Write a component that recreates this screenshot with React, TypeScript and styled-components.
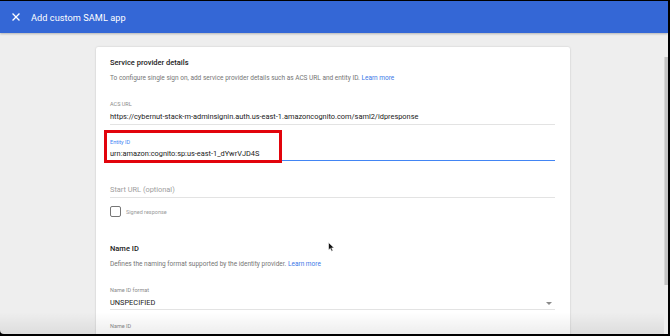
import React from 'react';
import styled, { createGlobalStyle } from 'styled-components';

const GlobalStyle = createGlobalStyle`
    html, body {
        margin: 0;
        padding: 0;
        background: #000;
        overflow: hidden;
    }
    * {
        box-sizing: border-box;
    }
`;

const Frame = styled.div`
    width: 670px;
    height: 336px;
    background: #000;
    padding: 1px 2px 2px 0;
    font-family: Roboto, 'Liberation Sans', sans-serif;
`;

const Window = styled.div`
    width: 100%;
    height: 100%;
    display: flex;
    flex-direction: column;
    background: #eeeeee;
    border-bottom-left-radius: 4px;
    overflow: hidden;
`;

const Header = styled.header`
    height: 32px;
    flex-shrink: 0;
    display: flex;
    align-items: center;
    gap: 11px;
    padding-left: 12px;
    background: #3467d6;
    color: #fff;
    box-shadow: 0 1px 2px rgba(0, 0, 0, 0.25);
    position: relative;
    z-index: 1;
`;

const Title = styled.h1`
    margin: 0;
    font-size: 9.2px;
    font-weight: 400;
    letter-spacing: 0.05px;
`;

const Body = styled.div`
    flex: 1;
    display: flex;
    min-height: 0;
`;

const Main = styled.main`
    flex: 1;
    position: relative;
    padding: 14px 0 0 96px;
    overflow: hidden;
`;

const ScrollTrack = styled.div`
    width: 4px;
    padding-top: 24px;
`;

const ScrollThumb = styled.div`
    height: 228px;
    background: #c3c3c3;
    border-left: 1px solid #d6d6d6;
`;

const Card = styled.section`
    width: 474px;
    height: 320px;
    background: #fff;
    padding: 11px 15px 0 14px;
    box-shadow: 0 0 2px rgba(0, 0, 0, 0.18), 0 1px 1px rgba(0, 0, 0, 0.08);
    border-radius: 2px;
`;

const SectionTitle = styled.h2<{ $top?: number }>`
    margin: ${(p) => p.$top ?? 0}px 0 0;
    font-size: 7.5px;
    line-height: 10px;
    font-weight: 500;
    color: #222;
`;

const SectionDesc = styled.p`
    margin: 6px 0 0;
    font-size: 6.5px;
    line-height: 9px;
    color: #757575;
`;

const Link = styled.a`
    color: #3b78e7;
    text-decoration: none;
`;

const Field = styled.div<{ $top: number; $focused?: boolean; $bare?: boolean }>`
    position: relative;
    margin-top: ${(p) => p.$top}px;
    border-bottom: 1px solid ${(p) => (p.$bare ? 'transparent' : p.$focused ? '#4285f4' : '#e3e3e3')};
`;

const FieldLabel = styled.div<{ $focused?: boolean }>`
    font-size: 5.5px;
    line-height: 8px;
    color: ${(p) => (p.$focused ? '#4285f4' : '#8a8a8a')};
`;

const FieldValue = styled.div<{ $gap: number; $pad: number; $muted?: boolean }>`
    display: flex;
    justify-content: space-between;
    align-items: center;
    margin-top: ${(p) => p.$gap}px;
    padding-bottom: ${(p) => p.$pad}px;
    font-size: 7.4px;
    line-height: 10px;
    color: ${(p) => (p.$muted ? '#9e9e9e' : '#212121')};
`;

const Caret = styled.span`
    width: 0;
    height: 0;
    margin-right: 3px;
    border-left: 3px solid transparent;
    border-right: 3px solid transparent;
    border-top: 3px solid #8a8a8a;
`;

const Highlight = styled.div`
    position: absolute;
    left: -6px;
    top: -8px;
    width: 178px;
    height: 33px;
    border: 3px solid #e2040c;
    pointer-events: none;
`;

const CheckRow = styled.label`
    display: flex;
    align-items: center;
    gap: 5px;
    margin-top: 8px;
    font-size: 5.5px;
    color: #9a9a9a;
`;

const CheckBox = styled.span`
    width: 11px;
    height: 11px;
    border: 1.5px solid #767676;
    border-radius: 2px;
`;

const BottomFade = styled.div`
    position: absolute;
    left: 0;
    right: 0;
    bottom: 0;
    height: 22px;
    background: linear-gradient(rgba(0, 0, 0, 0), rgba(0, 0, 0, 0.07));
    pointer-events: none;
`;

const Cursor = styled.svg`
    position: absolute;
    left: 328px;
    top: 209px;
`;

const CloseIcon = () => (
    <svg width="8" height="8" viewBox="0 0 8 8">
        <path d="M1 1L7 7M7 1L1 7" stroke="#fff" strokeWidth="1.3" strokeLinecap="square" />
    </svg>
);

const App = () => {
    return (
        <>
            <GlobalStyle />
            <Frame>
                <Window>
                    <Header>
                        <CloseIcon />
                        <Title>Add custom SAML app</Title>
                    </Header>
                    <Body>
                        <Main>
                            <Card>
                                <SectionTitle>Service provider details</SectionTitle>
                                <SectionDesc>
                                    To configure single sign on, add service provider details such as ACS URL and entity ID.{' '}
                                    <Link>Learn more</Link>
                                </SectionDesc>

                                <Field $top={17}>
                                    <FieldLabel>ACS URL</FieldLabel>
                                    <FieldValue $gap={4} $pad={2}>
                                        https://cybernut-stack-m-adminsignin.auth.us-east-1.amazoncognito.com/saml2/idpresponse
                                    </FieldValue>
                                </Field>

                                <Field $top={13} $focused>
                                    <FieldLabel $focused>Entity ID</FieldLabel>
                                    <FieldValue $gap={3} $pad={1}>
                                        urn:amazon:cognito:sp:us-east-1_dYwrVJD4S
                                    </FieldValue>
                                    <Highlight />
                                </Field>

                                <Field $top={24}>
                                    <FieldValue $gap={0} $pad={2} $muted>
                                        Start URL (optional)
                                    </FieldValue>
                                </Field>

                                <CheckRow>
                                    <CheckBox />
                                    Signed response
                                </CheckRow>

                                <SectionTitle $top={27}>Name ID</SectionTitle>
                                <SectionDesc>
                                    Defines the naming format supported by the identity provider. <Link>Learn more</Link>
                                </SectionDesc>

                                <Field $top={17}>
                                    <FieldLabel>Name ID format</FieldLabel>
                                    <FieldValue $gap={4} $pad={1}>
                                        UNSPECIFIED
                                        <Caret />
                                    </FieldValue>
                                </Field>

                                <Field $top={12} $bare>
                                    <FieldLabel>Name ID</FieldLabel>
                                </Field>
                            </Card>
                            <Cursor width="7" height="10" viewBox="0 0 7 10">
                                <path d="M0.5 0.5L0.5 8L2.3 6.4L3.6 9.3L4.9 8.7L3.7 5.9L6.2 5.9Z" fill="#111" stroke="#fff" strokeWidth="0.6" />
                            </Cursor>
                            <BottomFade />
                        </Main>
                        <ScrollTrack>
                            <ScrollThumb />
                        </ScrollTrack>
                    </Body>
                </Window>
            </Frame>
        </>
    );
};

export default App;
